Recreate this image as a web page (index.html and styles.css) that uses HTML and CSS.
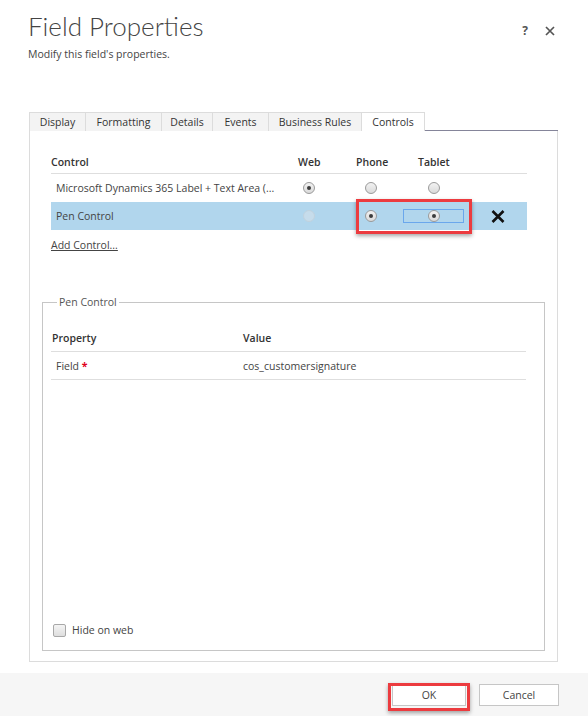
FILE: index.html
```html
<!DOCTYPE html>
<html>
<head>
<meta charset="utf-8">
<link rel="stylesheet" href="styles.css">
</head>
<body>
<div class="dialog">
  <header class="hdr">
    <div class="hdr-text">
      <h1 class="title">Field Properties</h1>
      <p class="subtitle">Modify this field's properties.</p>
    </div>
    <div class="hdr-icons">
      <span class="help">?</span>
      <svg class="close" width="10" height="10" viewBox="0 0 10 10"><path d="M1 1L9 9M9 1L1 9" stroke="#555" stroke-width="1.7" fill="none"/></svg>
    </div>
  </header>

  <div class="tabs-wrap">
    <div class="tabstrip">
      <div class="tab t-display">Display</div>
      <div class="tab t-format">Formatting</div>
      <div class="tab t-details">Details</div>
      <div class="tab t-events">Events</div>
      <div class="tab t-rules">Business Rules</div>
      <div class="tab t-controls active">Controls</div>
      <div class="tab-fill"></div>
    </div>
    <div class="panel">
      <div class="ctl-table">
        <div class="crow chead">
          <div class="c-name">Control</div>
          <div class="c-web">Web</div>
          <div class="c-phone">Phone</div>
          <div class="c-tablet"><span class="tablet-head">Tablet</span></div>
          <div class="c-x"></div>
        </div>
        <div class="crow">
          <div class="c-name cell-text">Microsoft Dynamics 365 Label + Text Area (...</div>
          <div class="c-web"><span class="radio checked"></span></div>
          <div class="c-phone"><span class="radio"></span></div>
          <div class="c-tablet"><span class="focusbox"><span class="radio"></span></span></div>
          <div class="c-x"></div>
        </div>
        <div class="crow sel">
          <div class="c-name cell-text">Pen Control</div>
          <div class="c-web"><span class="radio disabled"></span></div>
          <div class="c-phone"><span class="radio checked"></span></div>
          <div class="c-tablet"><span class="focusbox focused"><span class="radio checked"></span></span></div>
          <div class="c-x"><svg width="14" height="13" viewBox="0 0 14 13"><path d="M1.5 1L12.5 12M12.5 1L1.5 12" stroke="#111" stroke-width="2.6" fill="none"/></svg></div>
          <div class="annot annot-radios"></div>
        </div>
      </div>
      <a class="add-control">Add Control...</a>

      <fieldset class="props">
        <legend>Pen Control</legend>
        <div class="prow phead">
          <div class="p-name">Property</div>
          <div class="p-val">Value</div>
        </div>
        <div class="prow">
          <div class="p-name cell-text">Field <span class="req">*</span></div>
          <div class="p-val">cos_customersignature</div>
        </div>
        <label class="hide-web"><span class="cb"></span>Hide on web</label>
      </fieldset>
    </div>
  </div>

  <footer class="foot">
    <button class="btn btn-ok">OK<span class="annot annot-ok"></span></button>
    <button class="btn btn-cancel">Cancel</button>
  </footer>
</div>
</body>
</html>
```

FILE: styles.css
```css
* { box-sizing: border-box; }
html, body { margin: 0; padding: 0; background: #fff; }
body {
  font-family: "Open Sans", "Noto Sans", sans-serif;
  font-size: 10.5px;
  color: #444;
  width: 588px;
  height: 716px;
  overflow: hidden;
}
.dialog { display: flex; flex-direction: column; height: 716px; }

.hdr {
  display: flex;
  justify-content: space-between;
  align-items: flex-start;
  padding: 10px 33px 0 28px;
  height: 112px;
}
.title {
  margin: 0;
  font-family: "Lato", "Open Sans", sans-serif;
  font-weight: 300;
  font-size: 26px;
  line-height: 32px;
  color: #444;
}
.subtitle {
  margin: 5px 0 0 0;
  font-size: 10.5px;
  line-height: 14px;
  color: #444;
}
.hdr-icons {
  display: flex;
  align-items: center;
  gap: 17px;
  margin-top: 12px;
}
.help { font-weight: 700; font-size: 12px; color: #555; }
.close { display: block; }

.tabs-wrap { margin-left: 29px; width: 529px; }
.tabstrip { display: flex; height: 19px; }
.tab {
  height: 19px;
  line-height: 18px;
  font-size: 10.5px;
  text-align: center;
  background: #f3f3f3;
  border: 1px solid #dcdcdc;
  border-bottom: none;
  border-left: none;
  color: #333;
}
.t-display { width: 57px; border-left: 1px solid #dcdcdc; }
.t-format { width: 76px; }
.t-details { width: 51px; }
.t-events { width: 56px; }
.t-rules { width: 93px; }
.t-controls { width: 63px; }
.tab.active { background: #fff; }
.tab-fill { flex: 1; border-bottom: 1px solid #85859a; }

.panel {
  height: 531px;
  border: 1px solid #dcdcdc;
  border-top: none;
  padding: 19px 12px 10px 12px;
  display: flex;
  flex-direction: column;
}

.ctl-table { margin: 0 18px 0 9px; }
.crow {
  display: grid;
  grid-template-columns: 247px 58px 47px 77px 1fr;
  align-items: center;
  height: 28px;
  position: relative;
}
.crow.chead {
  height: 24px;
  font-weight: 600;
  color: #333;
  border-bottom: 1px solid #dedede;
}
.crow.sel { background: #b1d6ed; }
.cell-text { padding-left: 5px; color: #444; white-space: nowrap; }
.tablet-head { padding-left: 15px; }
.c-web .radio { margin-left: 5px; }
.c-phone .radio { margin-left: 9px; }
.c-x { padding-left: 11px; display: flex; align-items: center; }

.radio {
  display: block;
  width: 12px;
  height: 12px;
  border-radius: 50%;
  border: 1px solid #9a9a9a;
  background: linear-gradient(#f2f2f2, #dadada);
  position: relative;
}
.radio.checked::after {
  content: "";
  position: absolute;
  left: 3px; top: 3px;
  width: 4px; height: 4px;
  border-radius: 50%;
  background: #3c3c3c;
}
.radio.disabled {
  border-color: #c0d2de;
  background: #c6dceb;
}
.focusbox {
  display: flex;
  justify-content: center;
  align-items: center;
  width: 61px;
  height: 14px;
  border: 1px solid transparent;
}
.focusbox.focused { border-color: #6aa7ec; }

.annot {
  position: absolute;
  border: 3px solid #ec3b3f;
  box-shadow: 0 2px 4px rgba(0,0,0,0.35);
  pointer-events: none;
}
.annot-radios { left: 305px; top: -3px; width: 116px; height: 35px; }

.add-control {
  display: block;
  margin: 8px 0 0 9px;
  line-height: 14px;
  text-decoration: underline;
  color: #444;
  align-self: flex-start;
}

.props {
  flex: 1;
  margin: 43px 0 0 0;
  padding: 16px 18px 13px 8px;
  border: 1px solid #c6c6c6;
  display: flex;
  flex-direction: column;
  min-width: 0;
}
.props legend {
  padding: 0 2px;
  margin-left: 6px;
  font-size: 10.5px;
  color: #555;
  line-height: 14px;
}
.prow {
  display: grid;
  grid-template-columns: 192px 1fr;
  align-items: center;
  height: 28px;
  border-bottom: 1px solid #dedede;
}
.prow.phead { height: 27px; font-weight: 600; color: #333; }
.p-name { padding-left: 1px; }
.prow .cell-text { padding-left: 5px; }
.req { color: #e0001b; font-weight: 700; }
.hide-web {
  margin-top: auto;
  display: flex;
  align-items: center;
  gap: 6px;
  padding-left: 2px;
  color: #444;
  line-height: 14px;
}
.cb {
  display: block;
  width: 13px;
  height: 13px;
  border: 1px solid #a8a8a8;
  border-radius: 2px;
  background: linear-gradient(#f4f4f4, #dedede);
}

.foot {
  margin-top: auto;
  height: 43px;
  background: #f6f6f6;
  display: flex;
  justify-content: flex-end;
  align-items: flex-start;
  gap: 13px;
  padding: 11px 29px 0 0;
}
.btn {
  position: relative;
  height: 22px;
  background: #fff;
  border: 1px solid #c6c6c6;
  font-family: "Open Sans", "Noto Sans", sans-serif;
  font-size: 10.5px;
  color: #444;
  padding: 0;
}
.btn-ok { width: 74px; }
.btn-cancel { width: 80px; }
.annot-ok { left: -5px; top: -2px; width: 82px; height: 28px; }
```
